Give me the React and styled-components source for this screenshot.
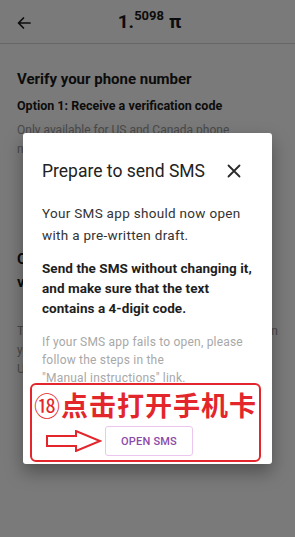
import React from 'react';
import styled, { createGlobalStyle } from 'styled-components';

const GlobalStyle = createGlobalStyle`
  html, body {
    margin: 0;
    padding: 0;
    background: #ffffff;
  }
  body {
    font-family: Roboto, "Noto Sans", Arial, sans-serif;
    color: #1c1c1c;
  }
  * {
    box-sizing: border-box;
  }
`;

const Page = styled.div`
  width: 295px;
  height: 537px;
  overflow: hidden;
  position: relative;
  background: #ffffff;
`;

const Header = styled.header`
  height: 44px;
  display: flex;
  align-items: center;
  justify-content: center;
  position: relative;
  border-bottom: 1px solid #d6d6d6;
`;

const BackButton = styled.button`
  position: absolute;
  left: 13px;
  top: 12px;
  width: 22px;
  height: 22px;
  padding: 0;
  border: 0;
  background: transparent;
  display: flex;
  align-items: center;
  justify-content: center;
`;

const Balance = styled.div`
  font-size: 19px;
  font-weight: 700;
  color: #1a1a1a;
  display: flex;
  align-items: flex-start;
  margin-left: 4px;
`;

const Decimals = styled.span`
  font-size: 13px;
  font-weight: 700;
  margin-top: -2px;
  margin-right: 5px;
`;

const Content = styled.main`
  padding: 25px 17px 0;
`;

const Heading = styled.h1`
  margin: 0;
  font-size: 15px;
  line-height: 20px;
  font-weight: 700;
  color: #1a1a1a;
`;

const SubHeading = styled.h2`
  margin: 8px 0 0;
  font-size: 12.5px;
  line-height: 18px;
  font-weight: 700;
  color: #1a1a1a;
`;

const Hint = styled.p`
  margin: ${(p) => p.$top || 6}px 0 0;
  font-size: 12px;
  line-height: 19px;
  color: #9a9a9a;
  white-space: ${(p) => (p.$lines ? 'nowrap' : 'normal')};
`;

const OptionTitle = styled.h2`
  margin: ${(p) => p.$top || 0}px 0 0;
  font-size: 15px;
  line-height: 23px;
  font-weight: 700;
  color: #1a1a1a;
`;

const Overlay = styled.div`
  position: absolute;
  inset: 0;
  background: rgba(0, 0, 0, 0.52);
  display: flex;
  justify-content: center;
  align-items: flex-start;
  padding-top: 133px;
`;

const Dialog = styled.div`
  width: 249px;
  background: #ffffff;
  border-radius: 3px;
  box-shadow: 0 8px 18px rgba(0, 0, 0, 0.35);
  padding: 26px 19px 2px;
`;

const DialogHead = styled.div`
  display: flex;
  align-items: center;
  justify-content: space-between;
`;

const DialogTitle = styled.h3`
  margin: 0;
  font-size: 17.5px;
  line-height: 24px;
  font-weight: 400;
  color: #222222;
`;

const CloseButton = styled.button`
  border: 0;
  background: transparent;
  padding: 0;
  margin-right: 11px;
  width: 16px;
  height: 16px;
  display: flex;
  align-items: center;
  justify-content: center;
`;

const Text = styled.p`
  margin: ${(p) => p.$top}px 0 0;
  font-size: ${(p) => p.$size || 13.5}px;
  line-height: ${(p) => p.$lh || 22}px;
  font-weight: ${(p) => (p.$bold ? 700 : 400)};
  letter-spacing: ${(p) => p.$track ?? 0.3}px;
  color: ${(p) => p.$color || '#333333'};
`;

const Annotation = styled.div`
  margin: -4px -8px 0 -12px;
  border: 2px solid #e3262b;
  border-radius: 6px;
  padding: 3px 0 4px;
  display: flex;
  flex-direction: column;
  align-items: flex-start;
`;

const Caption = styled.div`
  display: flex;
  align-items: center;
  padding-left: 2px;
  color: #e3262b;
  font-family: "Noto Sans CJK SC", "Noto Sans", sans-serif;
  line-height: 34px;
  white-space: nowrap;
`;

const Circled = styled.span`
  font-size: 26px;
  font-weight: 400;
  margin-right: 1px;
`;

const CaptionText = styled.span`
  font-size: 27px;
  font-weight: 700;
  letter-spacing: 1px;
`;

const ActionRow = styled.div`
  display: flex;
  align-items: center;
  padding-left: 14px;
  margin-top: 4px;
`;

const OpenButton = styled.button`
  width: 88px;
  height: 30px;
  margin-left: 3px;
  border: 1px solid #ecc6ee;
  border-radius: 3px;
  background: #ffffff;
  color: #8a4aa9;
  font-family: Roboto, sans-serif;
  font-size: 11px;
  font-weight: 500;
  letter-spacing: 0.2px;
`;

const ArrowLeft = () => (
  <svg width="16" height="16" viewBox="0 0 16 16" fill="none">
    <path d="M14 8H2.5M7.5 3L2.5 8l5 5" stroke="#1a1a1a" strokeWidth="1.7" strokeLinecap="round" strokeLinejoin="round" />
  </svg>
);

const CloseIcon = () => (
  <svg width="14" height="14" viewBox="0 0 14 14" fill="none">
    <path d="M1.5 1.5l11 11M12.5 1.5l-11 11" stroke="#2a2a2a" strokeWidth="1.8" strokeLinecap="round" />
  </svg>
);

const RightArrow = () => (
  <svg width="56" height="22" viewBox="0 0 56 22" fill="none">
    <path d="M1 6H30V1L54 11L30 21V16H1Z" fill="#ffffff" stroke="#e3262b" strokeWidth="2" strokeLinejoin="miter" />
  </svg>
);

export default function App() {
  return (
    <Page>
      <GlobalStyle />
      <Header>
        <BackButton>
          <ArrowLeft />
        </BackButton>
        <Balance>
          1.<Decimals>5098</Decimals>π
        </Balance>
      </Header>
      <Content>
        <Heading>Verify your phone number</Heading>
        <SubHeading>Option 1: Receive a verification code</SubHeading>
        <Hint>Only available for US and Canada phone numbers.</Hint>
        <OptionTitle $top={89}>Option 2: Send an SMS message to verify your phone number</OptionTitle>
        <Hint $top={28} $lines>
          To verify, send one SMS from your phone to Pi on
          <br />
          your phone number that you are trying to verify.
          <br />
          Usual carrier rates may apply.
        </Hint>
      </Content>
      <Overlay>
        <Dialog>
          <DialogHead>
            <DialogTitle>Prepare to send SMS</DialogTitle>
            <CloseButton>
              <CloseIcon />
            </CloseButton>
          </DialogHead>
          <Text $top={19}>Your SMS app should now open with a pre-written draft.</Text>
          <Text $top={12} $bold $lh={20} $track={0.05} $color="#1e1e1e">
            Send the SMS without changing it, and make sure that the text contains a 4-digit code.
          </Text>
          <Text $top={15} $size={12} $lh={18} $track={0.2} $color="#a8a8a8">
            If your SMS app fails to open, please
            <br />
            follow the steps in the
            <br />
            "Manual instructions" link.
          </Text>
          <Annotation>
            <Caption>
              <Circled>⑱</Circled>
              <CaptionText>点击打开手机卡</CaptionText>
            </Caption>
            <ActionRow>
              <RightArrow />
              <OpenButton>OPEN SMS</OpenButton>
            </ActionRow>
          </Annotation>
        </Dialog>
      </Overlay>
    </Page>
  );
}
